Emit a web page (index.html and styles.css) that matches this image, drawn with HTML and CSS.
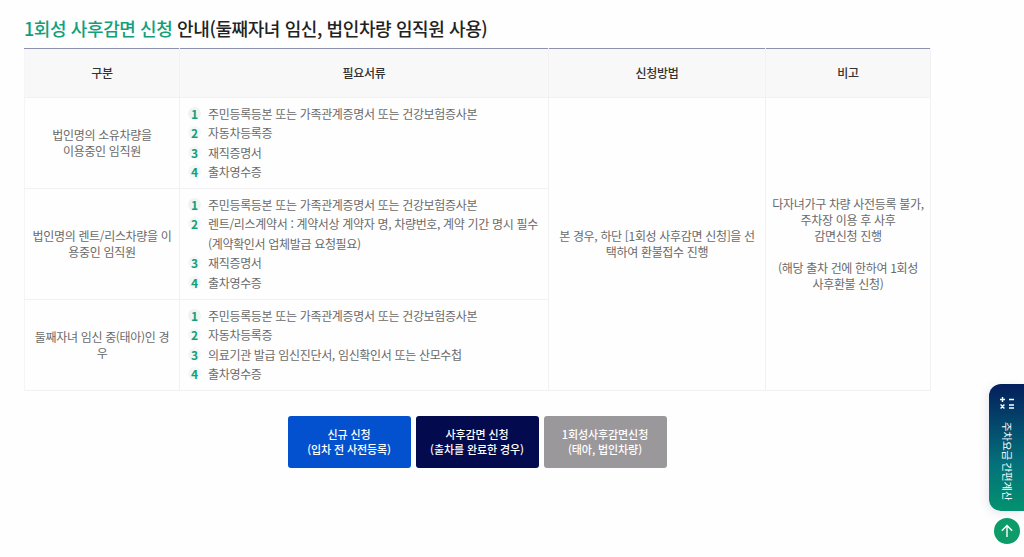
FILE: index.html
```html
<!DOCTYPE html>
<html lang="ko">
<head>
<meta charset="utf-8">
<title>1회성 사후감면 신청 안내</title>
<link rel="stylesheet" href="styles.css">
</head>
<body>
<main class="page">
  <h2 class="title"><span class="accent">1회성 사후감면 신청</span> 안내(둘째자녀 임신, 법인차량 임직원 사용)</h2>
  <table class="info">
    <colgroup>
      <col class="c1"><col class="c2"><col class="c3"><col class="c4">
    </colgroup>
    <thead>
      <tr><th>구분</th><th>필요서류</th><th>신청방법</th><th>비고</th></tr>
    </thead>
    <tbody>
      <tr class="r1">
        <td>법인명의 소유차량을<br>이용중인 임직원</td>
        <td class="docs">
          <ol>
            <li><b>1</b><span>주민등록등본 또는 가족관계증명서 또는 건강보험증사본</span></li>
            <li><b>2</b><span>자동차등록증</span></li>
            <li><b>3</b><span>재직증명서</span></li>
            <li><b>4</b><span>출차영수증</span></li>
          </ol>
        </td>
        <td rowspan="3">본 경우, 하단 [1회성 사후감면 신청]을 선택하여 환불접수 진행</td>
        <td rowspan="3" class="note">다자녀가구 차량 사전등록 불가,<br>주차장 이용 후 사후<br>감면신청 진행<br><br>(해당 출차 건에 한하여 1회성<br>사후환불 신청)</td>
      </tr>
      <tr class="r2">
        <td>법인명의 렌트/리스차량을 이용중인 임직원</td>
        <td class="docs">
          <ol>
            <li><b>1</b><span>주민등록등본 또는 가족관계증명서 또는 건강보험증사본</span></li>
            <li><b>2</b><span>렌트/리스계약서 : 계약서상 계약자 명, 차량번호, 계약 기간 명시 필수<br>(계약확인서 업체발급 요청필요)</span></li>
            <li><b>3</b><span>재직증명서</span></li>
            <li><b>4</b><span>출차영수증</span></li>
          </ol>
        </td>
      </tr>
      <tr class="r3">
        <td>둘째자녀 임신 중(태아)인 경우</td>
        <td class="docs">
          <ol>
            <li><b>1</b><span>주민등록등본 또는 가족관계증명서 또는 건강보험증사본</span></li>
            <li><b>2</b><span>자동차등록증</span></li>
            <li><b>3</b><span>의료기관 발급 임신진단서, 임신확인서 또는 산모수첩</span></li>
            <li><b>4</b><span>출차영수증</span></li>
          </ol>
        </td>
      </tr>
    </tbody>
  </table>
  <div class="actions">
    <a class="btn blue">신규 신청<br>(입차 전 사전등록)</a>
    <a class="btn navy">사후감면 신청<br>(출차를 완료한 경우)</a>
    <a class="btn gray">1회성사후감면신청<br>(태아, 법인차량)</a>
  </div>
</main>
<aside class="calc">
  <svg class="calc-icon" width="16" height="14" viewBox="0 0 16 14" aria-hidden="true">
    <path d="M1 3.5h5M3.5 1v5M10 3.5h5M1.6 8.6l3.8 3.8M5.4 8.6l-3.8 3.8M10 9h5M10 12h5" fill="none" stroke="#fff" stroke-width="1.4"/>
  </svg>
  <span class="calc-text">주차요금 간편계산</span>
</aside>
<a class="top" aria-label="맨 위로">
  <svg width="14" height="14" viewBox="0 0 14 14" aria-hidden="true">
    <path d="M7 13V1.5M1.8 6.7L7 1.5l5.2 5.2" fill="none" stroke="#fff" stroke-width="1.4"/>
  </svg>
</a>
</body>
</html>
```
FILE: styles.css
```css
* { box-sizing: border-box; }
html, body { margin: 0; height: 100%; overflow: hidden; }
body {
  background: #fefefe;
  color: #6a6a6a;
  font-family: "Noto Sans CJK KR", "Noto Sans", sans-serif;
  font-size: 12px;
  letter-spacing: -0.33px;
  position: relative;
}
.page { padding: 15px 94px 0 24px; }
.title {
  margin: 0 0 7px;
  height: 26px;
  font-size: 18px;
  line-height: 26px;
  font-weight: 500;
  color: #222;
  letter-spacing: -0.4px;
  white-space: nowrap;
}
.accent { color: #12a07c; }
.info {
  width: 906px;
  table-layout: fixed;
  border-collapse: collapse;
}
.c1 { width: 155px; }
.c2 { width: 369px; }
.c3 { width: 217px; }
.c4 { width: 165px; }
.info th, .info td {
  border: 1px solid #f3f0f3;
  text-align: center;
  vertical-align: middle;
  padding: 0 6px;
  line-height: 16px;
}
.info tr > :first-child { border-left-color: #f6f4f6; }
.info th {
  height: 49px;
  background: #f8f8f8;
  border-top: 1px solid #8f8fb0;
  font-weight: 500;
  color: #333;
  font-size: 12px;
}
.r1 { height: 91px; }
.r2 { height: 111px; }
.r3 { height: 91px; }
.info td.docs { padding: 0 4px 0 8px; text-align: left; }
.docs ol { list-style: none; margin: 0 0 1px; padding: 0; }
.docs li { display: flex; line-height: 19.5px; white-space: nowrap; }
.docs b {
  flex: none;
  width: 13px;
  height: 13px;
  margin: 3px 7px 0 0;
  border-radius: 50%;
  background: #f5f7f6;
  color: #12a07c;
  font-size: 12px;
  line-height: 13px;
  font-weight: 700;
  text-align: center;
  letter-spacing: 0;
}
.docs li:first-child b { background: #eff3f1; }
.info td.note { padding: 0 5px; }
.actions {
  display: flex;
  justify-content: center;
  gap: 5px;
  margin-top: 25px;
  width: 906px;
}
.btn {
  width: 123px;
  height: 52px;
  display: flex;
  align-items: center;
  justify-content: center;
  text-align: center;
  border-radius: 3px;
  color: #fff;
  font-size: 11px;
  line-height: 15px;
  font-weight: 500;
  letter-spacing: -0.1px;
}
.blue { background: #0451cf; }
.navy { background: #030a4e; }
.gray { background: #9b989c; }
.calc {
  position: absolute;
  left: 989px;
  top: 384px;
  width: 35px;
  height: 127px;
  border-radius: 12px 0 0 12px;
  background: linear-gradient(180deg, #031e5c 0%, #04707a 62%, #03926f 100%);
  box-shadow: -2px 2px 8px rgba(80, 60, 120, .12);
  display: flex;
  flex-direction: column;
  align-items: center;
  padding-top: 12px;
  color: #fff;
}
.calc-icon { margin-left: 1px; }
.calc-text {
  margin-top: 12px;
  writing-mode: vertical-rl;
  text-orientation: sideways;
  font-size: 10.5px;
  line-height: 14px;
  letter-spacing: -0.2px;
  white-space: nowrap;
}
.top {
  position: absolute;
  left: 994px;
  top: 518px;
  width: 26px;
  height: 26px;
  border-radius: 50%;
  background: #0d9c69;
  display: flex;
  align-items: center;
  justify-content: center;
}
```
